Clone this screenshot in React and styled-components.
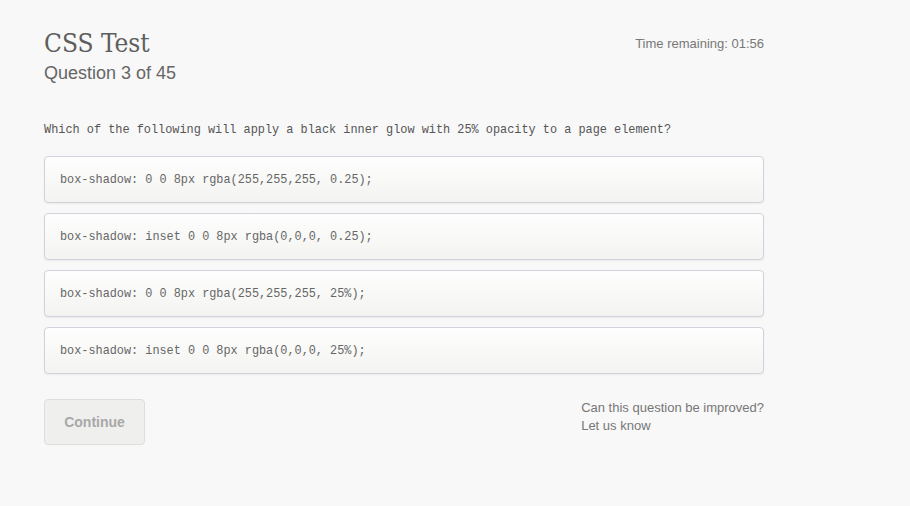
import React from "react";
import styled, { createGlobalStyle } from "styled-components";

const Global = createGlobalStyle`
  html, body { margin: 0; padding: 0; background: #f8f8f8; }
  body { font-family: "Liberation Sans", Arial, sans-serif; color: #666; }
`;

const Page = styled.div`
  width: 720px;
  padding: 28px 0 0 44px;
`;

const Header = styled.header`
  display: flex;
  justify-content: space-between;
  align-items: flex-start;
`;

const TitleBlock = styled.div`
  display: flex;
  flex-direction: column;
`;

const Title = styled.h1`
  margin: 0;
  font-family: "DejaVu Serif Condensed", "DejaVu Serif", Georgia, serif;
  font-weight: normal;
  font-size: 26px;
  line-height: 30px;
  color: #5e5e5e;
`;

const Subtitle = styled.h2`
  margin: 4px 0 0;
  font-weight: normal;
  font-size: 18px;
  line-height: 22px;
  color: #666;
`;

const Timer = styled.div`
  font-size: 13px;
  line-height: 18px;
  margin-top: 7px;
  color: #777;
`;

const Question = styled.p`
  margin: 38px 0 0;
  font-family: "Liberation Mono", "Courier New", monospace;
  font-size: 11.88px;
  line-height: 16px;
  color: #555;
`;

const Options = styled.div`
  display: flex;
  flex-direction: column;
  gap: 10px;
  margin-top: 18px;
`;

const Option = styled.button`
  display: flex;
  align-items: center;
  height: 47px;
  box-sizing: border-box;
  padding: 1px 15px 0;
  border: 1px solid #d2d2dc;
  border-radius: 4px;
  background: linear-gradient(to bottom, #fefefe, #f3f3f1);
  box-shadow: 0 1px 2px rgba(0, 0, 0, 0.06);
  font-family: "Liberation Mono", "Courier New", monospace;
  font-size: 11.85px;
  color: #666;
  text-align: left;
  cursor: pointer;
`;

const Footer = styled.div`
  display: flex;
  justify-content: space-between;
  align-items: flex-start;
  margin-top: 25px;
`;

const ContinueButton = styled.button`
  width: 101px;
  height: 46px;
  border: 1px solid #dedede;
  border-radius: 4px;
  background: #efefee;
  font-family: "Liberation Sans", Arial, sans-serif;
  font-weight: bold;
  font-size: 14px;
  color: #a8a8a8;
`;

const Feedback = styled.div`
  font-size: 13px;
  line-height: 18px;
  color: #777;
`;

const options = [
  "box-shadow: 0 0 8px rgba(255,255,255, 0.25);",
  "box-shadow: inset 0 0 8px rgba(0,0,0, 0.25);",
  "box-shadow: 0 0 8px rgba(255,255,255, 25%);",
  "box-shadow: inset 0 0 8px rgba(0,0,0, 25%);",
];

export default function App() {
  return (
    <>
      <Global />
      <Page>
        <Header>
          <TitleBlock>
            <Title>CSS Test</Title>
            <Subtitle>Question 3 of 45</Subtitle>
          </TitleBlock>
          <Timer>Time remaining: 01:56</Timer>
        </Header>
        <Question>
          Which of the following will apply a black inner glow with 25% opacity to a page element?
        </Question>
        <Options>
          {options.map((o) => (
            <Option key={o}>{o}</Option>
          ))}
        </Options>
        <Footer>
          <ContinueButton disabled>Continue</ContinueButton>
          <Feedback>
            Can this question be improved?
            <br />
            Let us know
          </Feedback>
        </Footer>
      </Page>
    </>
  );
}
